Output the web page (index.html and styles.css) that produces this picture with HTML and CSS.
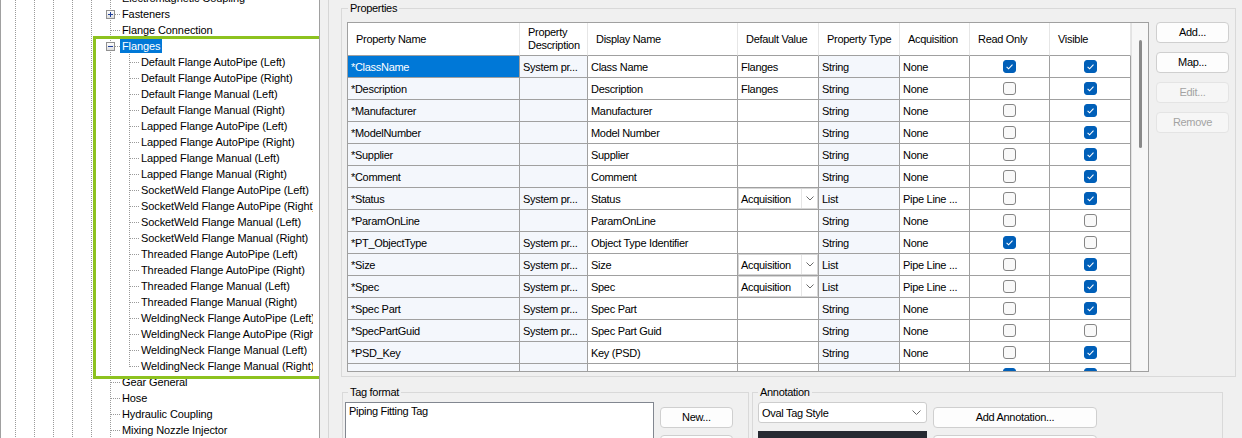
FILE: index.html
```html
<!DOCTYPE html>
<html>
<head>
<meta charset="utf-8">
<link rel="stylesheet" href="styles.css">
</head>
<body>
<div class="app">
  <div class="tree">
    <div class="tree-list">
      <div class="node"><span class="label">Electromagnetic Coupling</span></div>
      <div class="node has-box"><svg class="exp" width="9" height="9" viewBox="0 0 9 9"><defs><linearGradient id="g1" x1="0" y1="0" x2="0" y2="1"><stop offset="0" stop-color="#ffffff"/><stop offset="1" stop-color="#dcdcdc"/></linearGradient></defs><rect x="0.5" y="0.5" width="8" height="8" fill="url(#g1)" stroke="#919191"/><path d="M2 4.5h5M4.5 2v5" stroke="#21409a" stroke-width="1"/></svg><span class="label">Fasteners</span></div>
      <div class="node"><span class="label">Flange Connection</span></div>
      <div class="node has-box"><svg class="exp" width="9" height="9" viewBox="0 0 9 9"><rect x="0.5" y="0.5" width="8" height="8" fill="url(#g1)" stroke="#919191"/><path d="M2 4.5h5" stroke="#21409a" stroke-width="1"/></svg><span class="label sel">Flanges</span></div>
      <div class="node child"><span class="label">Default Flange AutoPipe (Left)</span></div>
      <div class="node child"><span class="label">Default Flange AutoPipe (Right)</span></div>
      <div class="node child"><span class="label">Default Flange Manual (Left)</span></div>
      <div class="node child"><span class="label">Default Flange Manual (Right)</span></div>
      <div class="node child"><span class="label">Lapped Flange AutoPipe (Left)</span></div>
      <div class="node child"><span class="label">Lapped Flange AutoPipe (Right)</span></div>
      <div class="node child"><span class="label">Lapped Flange Manual (Left)</span></div>
      <div class="node child"><span class="label">Lapped Flange Manual (Right)</span></div>
      <div class="node child"><span class="label">SocketWeld Flange AutoPipe (Left)</span></div>
      <div class="node child"><span class="label">SocketWeld Flange AutoPipe (Right)</span></div>
      <div class="node child"><span class="label">SocketWeld Flange Manual (Left)</span></div>
      <div class="node child"><span class="label">SocketWeld Flange Manual (Right)</span></div>
      <div class="node child"><span class="label">Threaded Flange AutoPipe (Left)</span></div>
      <div class="node child"><span class="label">Threaded Flange AutoPipe (Right)</span></div>
      <div class="node child"><span class="label">Threaded Flange Manual (Left)</span></div>
      <div class="node child"><span class="label">Threaded Flange Manual (Right)</span></div>
      <div class="node child"><span class="label">WeldingNeck Flange AutoPipe (Left)</span></div>
      <div class="node child"><span class="label">WeldingNeck Flange AutoPipe (Right)</span></div>
      <div class="node child"><span class="label">WeldingNeck Flange Manual (Left)</span></div>
      <div class="node child last"><span class="label">WeldingNeck Flange Manual (Right)</span></div>
      <div class="node"><span class="label">Gear General</span></div>
      <div class="node"><span class="label">Hose</span></div>
      <div class="node"><span class="label">Hydraulic Coupling</span></div>
      <div class="node"><span class="label">Mixing Nozzle Injector</span></div>
    </div>
    <div class="callout"></div>
  </div>

  <div class="splitter"></div>

  <div class="content">
    <div class="group props">
      <div class="gtitle">Properties</div>
      <div class="props-body">
        <div class="grid-frame">
          <div class="grid">
            <div class="h">Property Name</div>
            <div class="h">Property<br>Description</div>
            <div class="h">Display Name</div>
            <div class="h">Default Value</div>
            <div class="h">Property Type</div>
            <div class="h">Acquisition</div>
            <div class="h">Read Only</div>
            <div class="h">Visible</div>

            <div class="c sel">*ClassName</div><div class="c ro">System pr...</div><div class="c">Class Name</div><div class="c">Flanges</div><div class="c ro">String</div><div class="c">None</div><div class="c ck"><span class="cb on"><svg viewBox="0 0 13 13"><path d="M3.6 6.8l2 2 3.9-4.2"/></svg></span></div><div class="c ck"><span class="cb on"><svg viewBox="0 0 13 13"><path d="M3.6 6.8l2 2 3.9-4.2"/></svg></span></div>

            <div class="c ro">*Description</div><div class="c ro"></div><div class="c">Description</div><div class="c">Flanges</div><div class="c ro">String</div><div class="c">None</div><div class="c ck"><span class="cb"></span></div><div class="c ck"><span class="cb on"><svg viewBox="0 0 13 13"><path d="M3.6 6.8l2 2 3.9-4.2"/></svg></span></div>

            <div class="c ro">*Manufacturer</div><div class="c ro"></div><div class="c">Manufacturer</div><div class="c"></div><div class="c ro">String</div><div class="c">None</div><div class="c ck"><span class="cb"></span></div><div class="c ck"><span class="cb on"><svg viewBox="0 0 13 13"><path d="M3.6 6.8l2 2 3.9-4.2"/></svg></span></div>

            <div class="c ro">*ModelNumber</div><div class="c ro"></div><div class="c">Model Number</div><div class="c"></div><div class="c ro">String</div><div class="c">None</div><div class="c ck"><span class="cb"></span></div><div class="c ck"><span class="cb on"><svg viewBox="0 0 13 13"><path d="M3.6 6.8l2 2 3.9-4.2"/></svg></span></div>

            <div class="c ro">*Supplier</div><div class="c ro"></div><div class="c">Supplier</div><div class="c"></div><div class="c ro">String</div><div class="c">None</div><div class="c ck"><span class="cb"></span></div><div class="c ck"><span class="cb on"><svg viewBox="0 0 13 13"><path d="M3.6 6.8l2 2 3.9-4.2"/></svg></span></div>

            <div class="c ro">*Comment</div><div class="c ro"></div><div class="c">Comment</div><div class="c"></div><div class="c ro">String</div><div class="c">None</div><div class="c ck"><span class="cb"></span></div><div class="c ck"><span class="cb on"><svg viewBox="0 0 13 13"><path d="M3.6 6.8l2 2 3.9-4.2"/></svg></span></div>

            <div class="c ro">*Status</div><div class="c ro">System pr...</div><div class="c">Status</div><div class="c cc"><div class="combo"><span class="ctext">Acquisition</span><span class="dd"><svg width="8" height="5" viewBox="0 0 8 5"><path d="M0.5 0.5L4 4L7.5 0.5"/></svg></span></div></div><div class="c ro">List</div><div class="c">Pipe Line ...</div><div class="c ck"><span class="cb"></span></div><div class="c ck"><span class="cb on"><svg viewBox="0 0 13 13"><path d="M3.6 6.8l2 2 3.9-4.2"/></svg></span></div>

            <div class="c ro">*ParamOnLine</div><div class="c ro"></div><div class="c">ParamOnLine</div><div class="c"></div><div class="c ro">String</div><div class="c">None</div><div class="c ck"><span class="cb"></span></div><div class="c ck"><span class="cb"></span></div>

            <div class="c ro">*PT_ObjectType</div><div class="c ro">System pr...</div><div class="c">Object Type Identifier</div><div class="c"></div><div class="c ro">String</div><div class="c">None</div><div class="c ck"><span class="cb on"><svg viewBox="0 0 13 13"><path d="M3.6 6.8l2 2 3.9-4.2"/></svg></span></div><div class="c ck"><span class="cb"></span></div>

            <div class="c ro">*Size</div><div class="c ro">System pr...</div><div class="c">Size</div><div class="c cc"><div class="combo"><span class="ctext">Acquisition</span><span class="dd"><svg width="8" height="5" viewBox="0 0 8 5"><path d="M0.5 0.5L4 4L7.5 0.5"/></svg></span></div></div><div class="c ro">List</div><div class="c">Pipe Line ...</div><div class="c ck"><span class="cb"></span></div><div class="c ck"><span class="cb on"><svg viewBox="0 0 13 13"><path d="M3.6 6.8l2 2 3.9-4.2"/></svg></span></div>

            <div class="c ro">*Spec</div><div class="c ro">System pr...</div><div class="c">Spec</div><div class="c cc"><div class="combo"><span class="ctext">Acquisition</span><span class="dd"><svg width="8" height="5" viewBox="0 0 8 5"><path d="M0.5 0.5L4 4L7.5 0.5"/></svg></span></div></div><div class="c ro">List</div><div class="c">Pipe Line ...</div><div class="c ck"><span class="cb"></span></div><div class="c ck"><span class="cb on"><svg viewBox="0 0 13 13"><path d="M3.6 6.8l2 2 3.9-4.2"/></svg></span></div>

            <div class="c ro">*Spec Part</div><div class="c ro">System pr...</div><div class="c">Spec Part</div><div class="c"></div><div class="c ro">String</div><div class="c">None</div><div class="c ck"><span class="cb"></span></div><div class="c ck"><span class="cb on"><svg viewBox="0 0 13 13"><path d="M3.6 6.8l2 2 3.9-4.2"/></svg></span></div>

            <div class="c ro">*SpecPartGuid</div><div class="c ro">System pr...</div><div class="c">Spec Part Guid</div><div class="c"></div><div class="c ro">String</div><div class="c">None</div><div class="c ck"><span class="cb"></span></div><div class="c ck"><span class="cb"></span></div>

            <div class="c ro">*PSD_Key</div><div class="c ro"></div><div class="c">Key (PSD)</div><div class="c"></div><div class="c ro">String</div><div class="c">None</div><div class="c ck"><span class="cb"></span></div><div class="c ck"><span class="cb on"><svg viewBox="0 0 13 13"><path d="M3.6 6.8l2 2 3.9-4.2"/></svg></span></div>

            <div class="c ro">*PSD_PartFamilyLongDesc</div><div class="c ro"></div><div class="c">Long Description (Family)</div><div class="c"></div><div class="c ro">String</div><div class="c">None</div><div class="c ck"><span class="cb on"><svg viewBox="0 0 13 13"><path d="M3.6 6.8l2 2 3.9-4.2"/></svg></span></div><div class="c ck"><span class="cb on"><svg viewBox="0 0 13 13"><path d="M3.6 6.8l2 2 3.9-4.2"/></svg></span></div>
          </div>
          <div class="vscroll"><div class="thumb"></div></div>
        </div>
        <div class="side-buttons">
          <button class="btn">Add...</button>
          <button class="btn">Map...</button>
          <button class="btn" disabled>Edit...</button>
          <button class="btn" disabled>Remove</button>
        </div>
      </div>
    </div>

    <div class="bottom">
      <div class="group tag">
        <div class="gtitle">Tag format</div>
        <div class="tag-body">
          <div class="listbox">Piping Fitting Tag</div>
          <div class="stack">
            <button class="btn">New...</button>
            <button class="btn" aria-label="Edit tag format"></button>
          </div>
        </div>
      </div>
      <div class="group annot">
        <div class="gtitle">Annotation</div>
        <div class="annot-body">
          <div class="annot-left">
            <div class="select"><span class="ctext">Oval Tag Style</span><svg width="9" height="5" viewBox="0 0 9 5"><path d="M0.5 0.5L4.5 4.5L8.5 0.5"/></svg></div>
            <div class="preview"></div>
          </div>
          <div class="stack wide">
            <button class="btn">Add Annotation...</button>
            <button class="btn" aria-label="Remove annotation"></button>
          </div>
        </div>
      </div>
    </div>
  </div>
</div>
</body>
</html>
```

FILE: styles.css
```css
html, body {
  margin: 0;
  padding: 0;
}
body {
  width: 1242px;
  height: 438px;
  overflow: hidden;
  background: #f0f0f0;
  font-family: "Liberation Sans", Arial, sans-serif;
  font-size: 11px;
  color: #000;
  letter-spacing: -0.3px;
}
.app {
  display: flex;
  height: 438px;
  overflow: hidden;
}

/* ---------- tree ---------- */
.tree {
  position: relative;
  flex: none;
  width: 320px;
  height: 438px;
  box-sizing: border-box;
  border-left: 1px solid #a0a0a0;
  border-right: 1px solid #a0a0a0;
  background-color: #fff;
  background-image:
    linear-gradient(#9a9a9a 50%, transparent 50%),
    linear-gradient(#9a9a9a 50%, transparent 50%),
    linear-gradient(#9a9a9a 50%, transparent 50%),
    linear-gradient(#9a9a9a 50%, transparent 50%),
    linear-gradient(#9a9a9a 50%, transparent 50%),
    linear-gradient(#9a9a9a 50%, transparent 50%);
  background-size: 1px 2px;
  background-repeat: repeat-y;
  background-position: 14px 0, 33px 0, 52px 0, 71px 0, 90px 0, 109px 0;
  overflow: hidden;
  letter-spacing: -0.1px;
}
.tree-list {
  width: 312px;
  margin-top: -10px;
  overflow: hidden;
}
.node {
  display: flex;
  align-items: flex-start;
  height: 16px;
  padding-left: 119px;
  white-space: nowrap;
  background-image: repeating-linear-gradient(to right, #9a9a9a 0 1px, transparent 1px 2px);
  background-size: 9px 1px;
  background-position: 110px 8px;
  background-repeat: no-repeat;
}
.node.has-box {
  padding-left: 105px;
  background-size: 5px 1px;
  background-position: 114px 8px;
}
.exp {
  display: block;
  flex: none;
  margin-top: 4px;
  margin-right: 5px;
}
.node.child {
  padding-left: 138px;
  background-image:
    repeating-linear-gradient(to bottom, #9a9a9a 0 1px, transparent 1px 2px),
    repeating-linear-gradient(to right, #9a9a9a 0 1px, transparent 1px 2px);
  background-size: 1px 16px, 10px 1px;
  background-position: 128px 0, 129px 8px;
  background-repeat: no-repeat;
}
.node.child.last {
  background-size: 1px 9px, 10px 1px;
}
.label {
  display: block;
  height: 14px;
  line-height: 14px;
  margin-top: 1px;
  padding: 0 2px;
}
.label.sel {
  background: #0078d7;
  color: #fff;
}
.callout {
  position: absolute;
  left: 92px;
  top: 36px;
  width: 231px;
  height: 343px;
  box-sizing: border-box;
  border: 3px solid #8dc21f;
}

/* ---------- splitter ---------- */
.splitter {
  flex: none;
  width: 9px;
  box-sizing: border-box;
  border-right: 1px solid #d6d6d6;
}

/* ---------- content ---------- */
.content {
  flex: none;
  display: flex;
  flex-direction: column;
  height: 438px;
  overflow: hidden;
  padding-left: 12px;
}
.group {
  flex: none;
  box-sizing: border-box;
  border: 1px solid #d9d9d9;
}
.gtitle {
  width: max-content;
  height: 13px;
  line-height: 13px;
  margin-top: -7px;
  padding: 0 2px;
  background: #f0f0f0;
}
.props {
  margin-top: 8px;
  width: 895px;
  height: 369px;
  padding: 0 5px;
}
.props .gtitle {
  margin-left: 1px;
}
.props-body {
  display: flex;
  align-items: flex-start;
  margin-top: 7px;
}

/* ---------- grid ---------- */
.grid-frame {
  display: flex;
  width: 802px;
  height: 350px;
  box-sizing: border-box;
  border: 1px solid #a0a0a0;
  background: #fff;
}
.grid {
  display: grid;
  grid-template-columns: 172px 68px 150px 81px 81px 70px 80px 81px;
  grid-template-rows: 33px;
  grid-auto-rows: 22px;
  align-content: start;
  width: 783px;
  height: 348px;
  overflow: hidden;
}
.h {
  display: flex;
  align-items: center;
  box-sizing: border-box;
  padding-left: 8px;
  line-height: 13px;
  border-right: 1px solid #e6e6e6;
  border-bottom: 1px solid #a0a0a0;
  background: #fff;
  white-space: nowrap;
}
.c {
  display: flex;
  align-items: center;
  box-sizing: border-box;
  padding-left: 3px;
  border-right: 1px solid #a0a0a0;
  border-bottom: 1px solid #a0a0a0;
  background: #fff;
  white-space: nowrap;
  overflow: hidden;
}
.c.ro {
  background: #f4f7fc;
}
.c.sel {
  background: #0078d7;
  color: #fff;
}
.c.ck {
  justify-content: center;
  padding-left: 0;
}
.c.cc {
  padding-left: 0;
  align-items: stretch;
}
.combo {
  flex: 1;
  display: flex;
  align-items: center;
  box-sizing: border-box;
  border: 1px solid #d6d6d6;
  background: #fff;
}
.ctext {
  padding-left: 2px;
}
.dd {
  margin-left: auto;
  width: 15px;
  align-self: stretch;
  display: flex;
  align-items: center;
  justify-content: center;
  border-left: 1px solid #e6e6e6;
}
.dd svg path,
.select svg path {
  fill: none;
  stroke: #6a6a6a;
  stroke-width: 1;
}
.cb {
  display: block;
  width: 13px;
  height: 13px;
  box-sizing: border-box;
  border: 1px solid #858585;
  border-radius: 3px;
  background: #f9f9f9;
}
.cb.on {
  border-color: #005fb8;
  background: #005fb8;
}
.cb svg {
  display: block;
  width: 13px;
  height: 13px;
  margin: -1px;
}
.cb svg path {
  fill: none;
  stroke: #fff;
  stroke-width: 1.1;
}
.vscroll {
  width: 17px;
  height: 348px;
  background: #f7f7f7;
  border-left: 1px solid #e3e3e3;
  box-sizing: border-box;
}
.thumb {
  width: 3px;
  height: 108px;
  margin: 17px 0 0 7px;
  border-radius: 2px;
  background: #8a8a8a;
}

/* ---------- buttons ---------- */
.side-buttons {
  display: flex;
  flex-direction: column;
  gap: 9px;
  margin-left: 7px;
}
.btn {
  display: flex;
  align-items: center;
  justify-content: center;
  width: 73px;
  height: 21px;
  margin: 0;
  padding: 0 0 2px 0;
  box-sizing: border-box;
  border: 1px solid #cfcfcf;
  border-radius: 4px;
  background: #fdfdfd;
  font: inherit;
  letter-spacing: inherit;
  color: #000;
}
.btn:disabled {
  color: #a3a3a3;
  background: #f6f6f6;
  border-color: #e4e4e4;
}

/* ---------- bottom ---------- */
.bottom {
  flex: none;
  display: flex;
  gap: 3px;
  margin-top: 15px;
  margin-left: 1px;
}
.tag {
  width: 407px;
  height: 70px;
  padding: 0 2px;
}
.tag .gtitle {
  margin-left: 3px;
}
.tag-body {
  display: flex;
  align-items: flex-start;
  margin-top: 3px;
}
.listbox {
  width: 309px;
  height: 60px;
  box-sizing: border-box;
  border: 1px solid #828790;
  background: #fff;
  padding: 1px 3px;
  line-height: 14px;
}
.stack {
  display: flex;
  flex-direction: column;
  gap: 7px;
  margin-left: 6px;
  margin-top: 5px;
}
.stack.wide .btn {
  width: 164px;
}
.annot {
  width: 471px;
  height: 70px;
  padding: 0 5px;
}
.annot-body {
  display: flex;
  align-items: flex-start;
  margin-top: 3px;
}
.annot-left {
  display: flex;
  flex-direction: column;
}
.select {
  display: flex;
  align-items: center;
  justify-content: space-between;
  width: 169px;
  height: 21px;
  box-sizing: border-box;
  border: 1px solid #cdcdcd;
  border-radius: 3px;
  background: #fff;
  padding-right: 5px;
}
.select .ctext {
  padding-left: 3px;
}
.preview {
  width: 169px;
  height: 40px;
  margin-top: 8px;
  background: #262a32;
}
```
